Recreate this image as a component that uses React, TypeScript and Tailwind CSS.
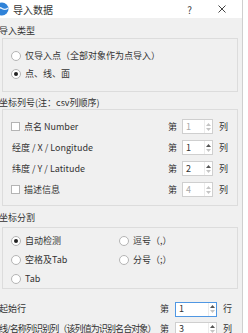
// ============================================
// IMPORT DATA DIALOG
// ============================================

const font = { fontFamily: '"Noto Sans CJK SC", "Noto Sans", sans-serif' };

function Radio({ checked = false, label }: { checked?: boolean; label: string }) {
    return (
        <div className="flex items-center gap-[4px]">
            <span className="w-[10px] h-[10px] rounded-full border border-[#b4b4b4] bg-white flex items-center justify-center">
                {checked && <span className="w-[4px] h-[4px] rounded-full bg-[#222]" />}
            </span>
            <span>{label}</span>
        </div>
    );
}

function Checkbox({ label }: { label: string }) {
    return (
        <div className="flex items-center gap-[4px]">
            <span className="w-[9px] h-[9px] border border-[#b4b4b4] bg-white" />
            <span>{label}</span>
        </div>
    );
}

interface SpinProps {
    value: string;
    disabled?: boolean;
    focused?: boolean;
    wide?: boolean;
}

function Spin({ value, disabled = false, focused = false, wide = false }: SpinProps) {
    return (
        <div
            className={
                'h-[15px] flex items-center bg-white border ' +
                (wide ? 'w-[42px] ' : 'w-[31px] ') +
                (focused ? 'border-[#4f97e3]' : 'border-[#cfcfcf]')
            }
        >
            <span className={'flex-1 pl-[3px] ' + (disabled ? 'text-[#a8a8a8]' : 'text-[#333]')}>{value}</span>
            <span className="w-[8px] h-full flex flex-col items-center justify-center gap-[2px] border-l border-[#ececec]">
                <svg width="5" height="3" viewBox="0 0 5 3">
                    <path d="M0 3 L2.5 0 L5 3 Z" fill={disabled ? '#c4c4c4' : '#555'} />
                </svg>
                <svg width="5" height="3" viewBox="0 0 5 3">
                    <path d="M0 0 L2.5 3 L5 0 Z" fill="#c4c4c4" />
                </svg>
            </span>
        </div>
    );
}

function ColRow({ left, value, disabled }: { left: React.ReactNode; value: string; disabled?: boolean }) {
    return (
        <div className="h-[21px] flex items-center justify-between pl-[8px] pr-[9px]">
            {left}
            <div className="flex items-center">
                <span className="mr-[5px]">第</span>
                <Spin value={value} disabled={disabled} />
                <span className="ml-[6px]">列</span>
            </div>
        </div>
    );
}

export default function App() {
    return (
        <div className="w-[248px] h-[333px] overflow-hidden bg-white text-[9px] text-[#333]" style={font}>
            <div className="w-[249px] -ml-[6px] h-[333px] border-r border-[#cfcfcf] flex flex-col">
                {/* Title bar */}
                <div className="h-[18px] shrink-0 bg-white flex items-center">
                    <svg width="14" height="14" viewBox="0 0 14 14" className="ml-[1px]">
                        <circle cx="7" cy="7" r="6.5" fill="#2f82d8" />
                        <path d="M1 7 Q4 4.5 7 6.5 T13 6" stroke="#e8f2fc" strokeWidth="1.4" fill="none" />
                    </svg>
                    <span className="ml-[4px] text-[10px]">导入数据</span>
                    <span className="ml-auto mr-[26px] text-[10px] text-[#444]">?</span>
                    <svg width="8" height="8" viewBox="0 0 8 8" className="mr-[16px]">
                        <path d="M0.5 0.5 L7.5 7.5 M7.5 0.5 L0.5 7.5" stroke="#444" strokeWidth="1" />
                    </svg>
                </div>

                {/* Body */}
                <div className="flex-1 bg-[#f0f0f0] pl-[5px]">
                    <div className="h-[20px] pt-[5px] leading-[16px]">导入类型</div>
                    <div className="ml-[3px] w-[236px] border border-[#dcdcdc] pt-[8px] pb-[8px] pl-[8px]">
                        <div className="h-[18px] flex items-center">
                            <Radio label="仅导入点（全部对象作为点导入）" />
                        </div>
                        <div className="h-[18px] flex items-center">
                            <Radio checked label="点、线、面" />
                        </div>
                    </div>

                    <div className="h-[17px] pt-[3px] leading-[16px]">坐标列号(注：csv列顺序)</div>
                    <div className="ml-[3px] w-[236px] border border-[#dcdcdc] pt-[6px] pb-[5px]">
                        <ColRow left={<Checkbox label="点名 Number" />} value="1" disabled />
                        <ColRow left={<span className="pl-[1px]">经度 / X / Longitude</span>} value="1" />
                        <ColRow left={<span className="pl-[1px]">纬度 / Y / Latitude</span>} value="2" />
                        <ColRow left={<Checkbox label="描述信息" />} value="4" disabled />
                    </div>

                    <div className="h-[21px] pt-[4px] leading-[16px]">坐标分割</div>
                    <div className="ml-[3px] w-[236px] border border-[#dcdcdc] pt-[3px] pl-[8px] grid grid-cols-[108px_1fr]">
                        <div className="h-[19px] flex items-center">
                            <Radio checked label="自动检测" />
                        </div>
                        <div className="h-[19px] flex items-center">
                            <Radio label="逗号（,）" />
                        </div>
                        <div className="h-[19px] flex items-center">
                            <Radio label="空格及Tab" />
                        </div>
                        <div className="h-[19px] flex items-center">
                            <Radio label="分号（;）" />
                        </div>
                        <div className="h-[19px] flex items-center">
                            <Radio label="Tab" />
                        </div>
                    </div>

                    <div className="mt-[10px] h-[20px] flex items-center justify-between pr-[10px]">
                        <span>起始行</span>
                        <div className="flex items-center">
                            <span className="mr-[6px]">第</span>
                            <Spin value="1" focused wide />
                            <span className="ml-[6px]">行</span>
                        </div>
                    </div>
                    <div className="h-[20px] flex items-center justify-between pr-[10px]">
                        <span className="whitespace-nowrap tracking-[-0.9px]">线/名称列识别列（该列值为识别名合对象）</span>
                        <div className="flex items-center shrink-0">
                            <span className="mr-[6px]">第</span>
                            <Spin value="3" wide />
                            <span className="ml-[6px]">列</span>
                        </div>
                    </div>
                </div>
            </div>
        </div>
    );
}
